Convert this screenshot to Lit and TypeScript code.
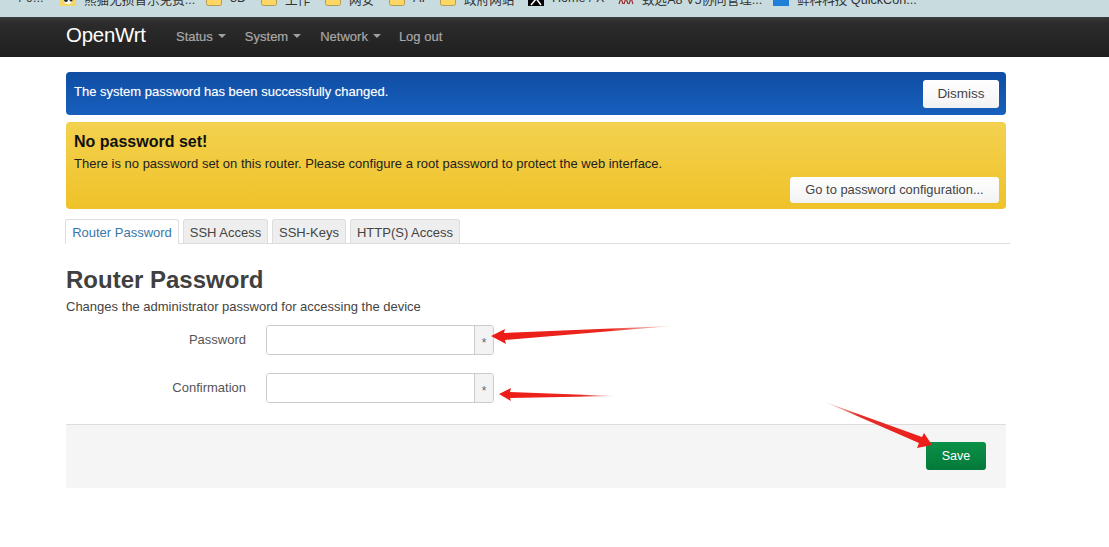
import { LitElement, html, css, svg } from "lit";
import { customElement } from "lit/decorators.js";

type Bm = { kind: string; label: string; gap: number; tw: number };
const bookmarks: Bm[] = [
  { kind: "none", label: "/ 9...", gap: 19, tw: 26 },
  { kind: "panda", label: "熊猫无损音乐免费...", gap: 15, tw: 106 },
  { kind: "folder", label: "3D", gap: 16, tw: 16 },
  { kind: "folder", label: "工作", gap: 15, tw: 26 },
  { kind: "folder", label: "网安", gap: 14, tw: 26 },
  { kind: "folder", label: "AI", gap: 14, tw: 14 },
  { kind: "folder", label: "政府网站", gap: 13, tw: 50 },
  { kind: "x", label: "Home / X", gap: 14, tw: 54 },
  { kind: "red", label: "致远A8 V5协同管理...", gap: 12, tw: 116 },
  { kind: "blue", label: "鲜科科技 QuickCon...", gap: 15, tw: 112 },
];

@customElement("app-root")
export class AppRoot extends LitElement {
  static styles = css`
    :host {
      display: block;
      position: relative;
      width: 1109px;
      height: 547px;
      overflow: hidden;
      background: #fff;
      font-family: "Liberation Sans", Arial, sans-serif;
      font-size: 13px;
      color: #404040;
    }
    .bookmarks {
      height: 17px;
      background: #c8dce0;
      overflow: hidden;
    }
    .bm-row {
      display: flex;
      align-items: center;
      height: 20px;
      margin-top: -12px;
      color: #333;
      font-size: 12.6px;
      font-family: "Liberation Sans", "Noto Sans CJK SC", sans-serif;
    }
    .bm {
      display: flex;
      align-items: center;
      gap: 8px;
      flex: none;
    }
    .bm-text { white-space: nowrap; }
    .bm svg { flex: none; display: block; }
    .navbar {
      height: 40px;
      box-sizing: border-box;
      background: linear-gradient(#3a3a3a, #2c2c2c 15%, #1f1f1f);
      display: flex;
      align-items: center;
      padding: 0 0 2px 66px;
    }
    .brand {
      color: #fff;
      font-size: 20.4px;
      width: 110px;
      letter-spacing: -0.2px;
      padding-bottom: 2px;
    }
    .nav-item {
      display: flex;
      align-items: center;
      gap: 5px;
      color: #a8a8a8;
      font-size: 13px;
      -webkit-text-stroke: 0.2px #a8a8a8;
    }
    .caret {
      width: 0;
      height: 0;
      border-left: 4px solid transparent;
      border-right: 4px solid transparent;
      border-top: 4px solid #a0a0a0;
    }
    .container {
      width: 940px;
      margin-left: 66px;
      padding-top: 15px;
    }
    .alert {
      box-sizing: border-box;
      border-radius: 4px;
      position: relative;
    }
    .alert-blue {
      height: 43px;
      background: linear-gradient(#0f4da3, #175fbd);
      color: #fff;
      display: flex;
      align-items: center;
      justify-content: space-between;
      padding: 0 7px 0 8px;
      font-size: 13px;
    }
    .alert-blue .msg { padding-bottom: 5px; text-shadow: 0 0 1px rgba(255,255,255,.4); }
    .btn {
      box-sizing: border-box;
      display: flex;
      align-items: center;
      justify-content: center;
      background: linear-gradient(#fff, #f2f2f2);
      border-radius: 3px;
      color: #444;
      font-size: 13px;
      padding-bottom: 1px;
    }
    .dismiss { width: 76px; height: 28px; margin-top: 1px; font-size: 13.5px; }
    .alert-yellow {
      height: 87px;
      margin-top: 7px;
      background: linear-gradient(#f3d14f, #efc229);
      color: #222;
      padding: 10px 8px 6px;
      display: flex;
      flex-direction: column;
    }
    .alert-yellow h4 {
      margin: 0;
      font-size: 16px;
      line-height: 19px;
      color: #111;
    }
    .alert-yellow p {
      margin: 5px 0 0;
      font-size: 13px;
      line-height: 15px;
      color: #222;
    }
    .goto {
      width: 209px;
      height: 26px;
      margin-top: auto;
      align-self: flex-end;
      margin-right: -1px;
      font-size: 12.9px;
    }
    .tabs {
      display: flex;
      gap: 4px;
      margin-top: 10px;
      width: 945px;
      height: 25px;
      box-sizing: border-box;
      border-bottom: 1px solid #ddd;
      margin-left: -1px;
    }
    .tab {
      box-sizing: border-box;
      height: 24px;
      display: flex;
      align-items: center;
      justify-content: center;
      padding-top: 1px;
      background: #eee;
      border: 1px solid #ddd;
      border-bottom: none;
      border-radius: 3px 3px 0 0;
      color: #444;
      font-size: 13px;
      flex: none;
    }
    .tab.active {
      height: 25px;
      background: #fff;
      color: #3a78a8;
    }
    h2 {
      margin: 23px 0 0;
      font-size: 24px;
      line-height: 26px;
      color: #404040;
    }
    .desc {
      margin: 6px 0 0;
      font-size: 13px;
      line-height: 15px;
      color: #444;
    }
    .form {
      display: grid;
      grid-template-columns: 200px 228px;
      row-gap: 18px;
      margin-top: 11px;
      align-items: center;
    }
    .form label {
      text-align: right;
      padding: 0 20px 2px 0;
      color: #555;
      font-size: 13px;
    }
    .field {
      display: flex;
      height: 30px;
      box-sizing: border-box;
      border: 1px solid #ccc;
      border-radius: 3px;
      overflow: hidden;
    }
    .field input {
      flex: 1;
      min-width: 0;
      border: none;
      outline: none;
      padding: 0;
      background: #fff;
    }
    .addon {
      width: 19px;
      flex: none;
      box-sizing: border-box;
      border-left: 1px solid #ccc;
      background: #f3f3f3;
      color: #666;
      font-size: 12px;
      display: flex;
      align-items: center;
      justify-content: center;
      padding-top: 5px;
    }
    .actions {
      margin-top: 21px;
      height: 64px;
      box-sizing: border-box;
      background: #f5f5f5;
      border-top: 1px solid #ddd;
      display: flex;
      justify-content: flex-end;
      padding: 17px 20px 0 0;
    }
    .save {
      width: 60px;
      height: 28px;
      box-sizing: border-box;
      display: flex;
      align-items: center;
      justify-content: center;
      background: linear-gradient(#0a9148, #06793a);
      color: #fff;
      font-size: 12.5px;
      border-radius: 3px;
    }
    .arrows {
      position: absolute;
      left: 0;
      top: 0;
      pointer-events: none;
    }
  `;

  private icon(kind: string) {
    if (kind === "none") return null;
    if (kind === "folder")
      return html`<svg width="16" height="18" viewBox="0 0 16 18">
        <rect x="0.5" y="0.5" width="15" height="16" rx="2" fill="#fdd663" stroke="#b49a52" />
      </svg>`;
    if (kind === "panda")
      return html`<svg width="16" height="18" viewBox="0 0 16 18">
        <rect width="16" height="17" fill="#f2d667" />
        <circle cx="8" cy="11" r="4" fill="#fff" />
        <circle cx="6" cy="11" r="2" fill="#222" />
        <circle cx="11" cy="11" r="1.5" fill="#222" />
      </svg>`;
    if (kind === "x")
      return html`<svg width="16" height="18" viewBox="0 0 16 18">
        <rect width="16" height="17" fill="#000" />
        <path d="M3 16 L8 10 M13 16 L7 8" stroke="#fff" stroke-width="1.5" fill="none" />
      </svg>`;
    if (kind === "red")
      return html`<svg width="16" height="18" viewBox="0 0 16 18">
        <path d="M1 15 L3 9 L5 15 M6 15 L8 9 L10 15 M11 15 L13 9 L15 15" stroke="#9c2a2a" stroke-width="1.2" fill="none" />
      </svg>`;
    return html`<svg width="16" height="18" viewBox="0 0 16 18">
      <rect width="16" height="17" fill="#1f7fd8" />
      <rect x="2" y="5" width="12" height="4" fill="#cfe6fb" />
    </svg>`;
  }

  private arrows() {
    return svg`<svg class="arrows" width="1109" height="547" viewBox="0 0 1109 547">
      <defs>
        <linearGradient id="a1" gradientUnits="userSpaceOnUse" x1="492" y1="336" x2="672" y2="327">
          <stop offset="0" stop-color="#ee1c17" />
          <stop offset="0.65" stop-color="#e8281f" />
          <stop offset="1" stop-color="#f0a098" stop-opacity="0.5" />
        </linearGradient>
        <linearGradient id="a2" gradientUnits="userSpaceOnUse" x1="500" y1="394" x2="616" y2="396">
          <stop offset="0" stop-color="#ee1c17" />
          <stop offset="0.7" stop-color="#e8281f" />
          <stop offset="1" stop-color="#f0a098" stop-opacity="0.5" />
        </linearGradient>
        <linearGradient id="a3" gradientUnits="userSpaceOnUse" x1="931" y1="444" x2="826" y2="403">
          <stop offset="0" stop-color="#ee1c17" />
          <stop offset="0.7" stop-color="#e3302a" />
          <stop offset="1" stop-color="#f0a098" stop-opacity="0.5" />
        </linearGradient>
      </defs>
      <polygon fill="url(#a1)" points="491,336 505,329 504,333 672,326 505,340 506,344" />
      <polygon fill="url(#a2)" points="499,394 511,388 510,392 616,396 510,398 511,401" />
      <polygon fill="url(#a3)" points="932,445 924,433 922,437 825,402 919,443 917,448" />
    </svg>`;
  }

  render() {
    return html`
      <div class="bookmarks">
        <div class="bm-row">
          ${bookmarks.map(
            (b) => html`<div class="bm" style="margin-left:${b.gap}px">
              ${this.icon(b.kind)}
              <span class="bm-text" style="width:${b.tw}px">${b.label}</span>
            </div>`
          )}
        </div>
      </div>
      <div class="navbar">
        <div class="brand">OpenWrt</div>
        <div class="nav-item" style="margin-right:19px">Status <span class="caret"></span></div>
        <div class="nav-item" style="margin-right:19px">System <span class="caret"></span></div>
        <div class="nav-item" style="margin-right:18px">Network <span class="caret"></span></div>
        <div class="nav-item">Log out</div>
      </div>
      <div class="container">
        <div class="alert alert-blue">
          <span class="msg">The system password has been successfully changed.</span>
          <div class="btn dismiss">Dismiss</div>
        </div>
        <div class="alert alert-yellow">
          <h4>No password set!</h4>
          <p>There is no password set on this router. Please configure a root password to protect the web interface.</p>
          <div class="btn goto">Go to password configuration...</div>
        </div>
        <div class="tabs">
          <div class="tab active" style="width:114px">Router Password</div>
          <div class="tab" style="width:85px">SSH Access</div>
          <div class="tab" style="width:74px">SSH-Keys</div>
          <div class="tab" style="width:110px">HTTP(S) Access</div>
        </div>
        <h2>Router Password</h2>
        <p class="desc">Changes the administrator password for accessing the device</p>
        <div class="form">
          <label>Password</label>
          <div class="field"><input type="password" /><span class="addon">*</span></div>
          <label>Confirmation</label>
          <div class="field"><input type="password" /><span class="addon">*</span></div>
        </div>
        <div class="actions"><div class="save">Save</div></div>
      </div>
      ${this.arrows()}
    `;
  }
}
